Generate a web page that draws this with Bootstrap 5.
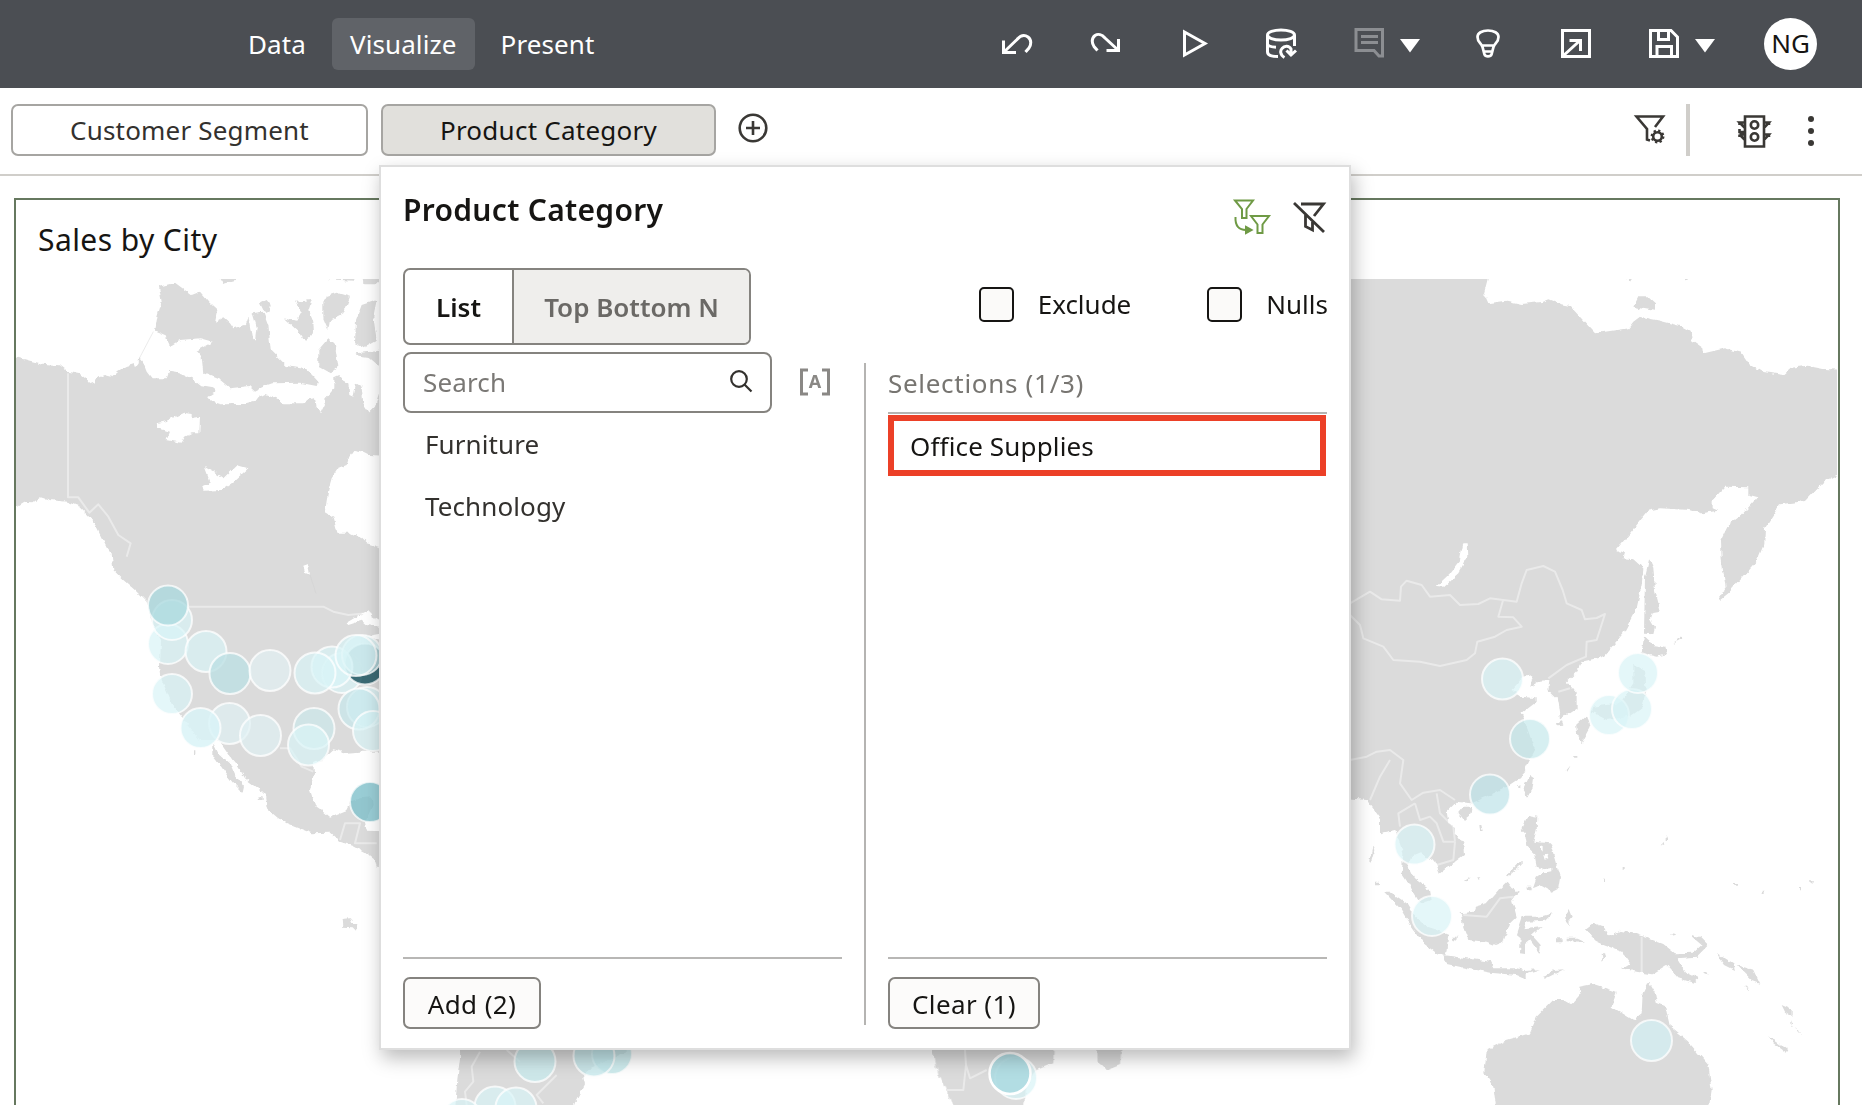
<!DOCTYPE html>
<html lang="en">
<head>
<meta charset="utf-8">
<meta name="viewport" content="width=device-width, initial-scale=1">
<title>Sales by City</title>
<link href="https://cdn.jsdelivr.net/npm/bootstrap@5.3.0/dist/css/bootstrap.min.css" rel="stylesheet">
<style>
body{font-family:"Noto Sans",sans-serif;font-size:26px;line-height:1.36;color:#161513;height:1105px;overflow:hidden;background:#fff}
svg{display:block;flex:none;overflow:visible}
.topbar{height:88px;background:#4b4e53;padding:0 45px 0 230px}
.topbar .nav-link{color:#fff;height:52px;padding:2px 18px 0;display:flex;align-items:center;border-radius:6px;letter-spacing:.1px}
.topbar .nav-link.active{background:#606368}
.tools{gap:56px}
.tools svg,.ico{fill:none;stroke:#fff;stroke-width:3}
.tools .caret{fill:#fff;stroke:none}
.tools .dim{stroke:#8c8e92}
.avatar{width:53px;height:52px;background:#fff;color:#161513;border-radius:50%;margin-left:-3px}
.filterbar{height:88px;border-bottom:2px solid #d0ceca;padding:16px 48px 18px 11px}
.pill{height:52px;border:2px solid #a6a5a2;border-radius:7px;background:#fff;color:#33312e;font-size:26px;padding:1px 0 0;letter-spacing:.18px}
.pill.on{background:#e1e0dc;color:#161513;letter-spacing:.25px}
.dark{fill:none;stroke:#3a3835;stroke-width:2.6}
.bar{width:4px;height:52px;background:#d0ceca}
.viz{margin:22px 22px 0 14px;border:2px solid #66785f;border-radius:0;height:960px;overflow:hidden}
.viz h2{font-size:30px;font-weight:400;line-height:40px;margin:0;padding:20px 22px 19px;letter-spacing:.42px}
.viz svg{overflow:hidden}
.pop{position:absolute;left:379px;top:165px;width:972px;height:885px;border:2px solid #dedede;background:#fff;box-shadow:3px 8px 18px rgba(0,0,0,.27);padding:0 21px 19px 22px}
.pop h3{font-size:30px;font-weight:600;margin:0;letter-spacing:.3px}
.seg{height:77px;width:348px;border:2px solid #85837f;border-radius:7px;overflow:hidden;font-weight:600}
.seg>div{padding-top:2px}
.seg .one{width:109px;border-right:2px solid #85837f}
.seg .two{background:#efeeec;color:#6b6966}
.chk{width:35px;height:35px;border:2.5px solid #161513;border-radius:5px;background:#fbfaf9;margin:0 24px 0 0}
.colum{width:439px}
.find{width:369px;height:61px;border:2px solid #85837f;border-radius:8px;padding:1px 18px 0 18px;color:#7a7875;letter-spacing:.15px}
.item{height:62px;padding:2px 0 0 22px;color:#33312e;letter-spacing:.1px}
.vr2{width:2px;margin:11px 22px 4px;background:#b5b4b2}
.sel{height:62px;border-bottom:2px solid #b5b4b2;color:#777571;letter-spacing:.7px;padding-top:3px}
.hot{height:61px;margin-top:1px;border:6px solid #ec4027;padding:2px 0 0 16px;width:438px;letter-spacing:.15px}
.foot{border-top:2px solid #b8b7b5;padding-top:18px}
.foot .btn{height:52px;border:2px solid #85837f;border-radius:7px;background:#fcfbfa;color:#161513;font-size:26px;padding:1px 0 0;line-height:1;letter-spacing:.4px}
</style>
</head>
<body>
<nav class="topbar d-flex align-items-center justify-content-between">
  <div class="d-flex" style="gap:8px">
    <a class="nav-link" href="#">Data</a>
    <a class="nav-link active" href="#">Visualize</a>
    <a class="nav-link" href="#">Present</a>
  </div>
  <div class="tools d-flex align-items-center">
    <svg width="32" height="32"><path d="M2.500 12.500V24.500H15M3 24L16 11.500C19 8 23 6 27 9C31 12 30 17 28 20L24.500 24"/></svg>
    <svg width="32" height="32"><path d="M29.500 11V22.500H17.500M29 22L16 10C13 6.500 9 5.500 6 7.500C2 10.500 3 15.500 5 18.500L8.500 22.500"/></svg>
    <svg width="32" height="32"><path d="M7.500 4L28 15.500L7.500 27Z"/></svg>
    <svg width="32" height="32"><ellipse cx="16" cy="7" rx="13.500" ry="5"/><path d="M2.500 7V24C2.500 27 7 28.500 13 28.500M29.500 7V18M2.500 16C3 18 7 19 11 19.200M19.500 29.500C15 27 15 22.500 17 20.500C19.500 17.500 24 17.500 26 21V27M21.500 22.500L26 27L31 22.500"/></svg>
    <div class="d-flex align-items-center" style="gap:16px">
      <svg class="dim" width="32" height="32"><path d="M3 1.500H29.500V28H26L21 22.500H3ZM8 8.500H25M8 14.500H25"/></svg>
      <svg class="caret" width="15" height="14"><path d="M-1 2H19L9 15.500Z"/></svg>
    </div>
    <svg width="32" height="32"><path d="M10.500 19C9 15 5.500 14 5.500 9C5.500 5 10 2.500 16 2.500S26.500 5 26.500 9C26.500 14 23 15 21.500 19L19.500 26.500C18.500 29 13.500 29 12.500 26.500ZM9 17.500H23M11 23.500H21" stroke-width="2.700"/></svg>
    <svg width="32" height="32"><path d="M2.500 2.500H29.500V28.500H2.500ZM3 28L20 12.500M9.500 12.500H20.500V23"/></svg>
    <div class="d-flex align-items-center" style="gap:16px">
      <svg width="32" height="32"><path d="M2.500 2.500H23L29.500 9V28.500H2.500ZM10.500 3V11.500H20.500V3M9 28V18.500H23.500V28"/></svg>
      <svg class="caret" width="15" height="14"><path d="M-1 2H19L9 15.500Z"/></svg>
    </div>
    <div class="avatar d-flex align-items-center justify-content-center">NG</div>
  </div>
</nav>

<div class="filterbar d-flex align-items-center">
  <button class="btn pill" style="width:357px">Customer Segment</button>
  <button class="btn pill on" style="width:335px;margin-left:13px">Product Category</button>
  <svg class="dark" width="32" height="32" style="margin:-4px 0 0 21px"><circle cx="16" cy="16" r="13.300"/><path d="M16 9V23M9 16H23"/></svg>
  <div class="d-flex align-items-center ms-auto">
    <svg class="dark" width="32" height="32" viewBox="0 0 32 32"><path d="M21 13L29 2.500H2.500L13 15V25.500L16 26.500" stroke-width="2.600"/><circle cx="23.500" cy="22.500" r="4.300"/><circle cx="23.500" cy="22.500" r="5.700" stroke-dasharray="2.200 2.270" stroke-width="2.500"/></svg>
    <div class="bar" style="margin:0 48px 0 20px"></div>
    <svg class="dark" width="32" height="34"><path d="M7 3.500H26V33.500H7ZM7 19H1.500V16M26 9.500H31L26 15M7 9.500H1.500L7 15M1.500 21.500L7 27M26 21.500H31L26 27M1.500 21.500H7M1.500 9.500V12M31 9.500V12M31 21.500V24M1.500 21.500V24"/><circle cx="16.500" cy="12" r="3.700"/><circle cx="16.500" cy="24" r="3.700"/></svg>
    <svg width="6" height="32" fill="#3a3835" style="margin-left:38px"><circle cx="3" cy="5" r="3"/><circle cx="3" cy="17" r="3"/><circle cx="3" cy="29" r="3"/></svg>
  </div>
</div>

<section class="viz">
  <h2>Sales by City</h2>
  <svg width="1821" height="826" viewBox="16 279 1821 826">
    <defs><filter id="coast" x="0" y="0" width="1" height="1"><feTurbulence type="fractalNoise" baseFrequency=".16" numOctaves="2" seed="4"/><feDisplacementMap in="SourceGraphic" scale="5" xChannelSelector="R" yChannelSelector="G"/></filter></defs>
    <g fill="#dbdbdb" filter="url(#coast)">
      <!-- North America -->
      <g transform="translate(0 260) scale(.33333)">
        <path d="M20 290L60 294 90 302 130 312 180 316 205 335 240 342 262 360 285 374 290 355 315 345 335 350 355 332 380 318 400 312 405 325 415 312 418 295 430 310 440 335 455 355 500 355 508 335 535 340 575 355 600 375 640 382 648 395 628 408 635 425 660 433 740 432 765 425 775 412 795 402 830 415 850 430 910 430 925 418 945 415 950 445 965 455 975 435 972 420 990 400 1003 385 1003 350 1015 345 1030 362 1045 370 1048 405 1060 410 1068 370 1085 380 1090 430 1108 457 1125 440 1138 400 1200 400V590L1110 585 1090 575 1062 570 1048 590 1040 615 1015 625 995 655 985 690 975 755 1000 770 1012 818 1050 818 1085 835 1100 850 1200 880V1475L1080 1475 1040 1478 1000 1468 965 1500 940 1510 942 1540 930 1590 945 1635 990 1673 1035 1655 1050 1625 1080 1615 1115 1612 1118 1635 1105 1665 1095 1690 1100 1712 1200 1715V1825L1130 1820 1125 1800 1100 1780 1060 1758 1020 1745 990 1718 935 1720 860 1690 830 1670 800 1645 795 1605 775 1585 735 1555 715 1520 690 1490 655 1440 600 1440 545 1370 520 1340 485 1260 480 1220 483 1140 460 1100 440 1025 410 995 370 960 340 930 335 880 320 860 290 800 270 770 240 740 200 725 150 720 125 712 100 730 70 728 20 760Z"/>
        <path d="M477 80L525 68 575 105 600 95 630 130 652 150 645 185 670 172 690 190 700 205 735 195 745 168 755 230 765 242 770 200 758 160 790 155 805 195 812 270 860 318 920 328 955 365 950 378 900 368 820 370 790 380 765 392 750 378 690 385 660 360 610 340 605 290 590 272 638 245 600 235 540 240 510 258 495 225 465 212 472 170 485 125Z"/>
        <path d="M780 130L800 120 812 135 808 160 790 150ZM885 125L935 120 925 150 940 185 942 220 912 245 890 210 852 175 890 185 905 160ZM650 40H710L705 62 670 72ZM980 108L1010 98 1050 110 1030 160 990 180 985 210 970 175 970 125ZM1085 135L1130 120 1120 170 1130 240 1090 262 1065 250 1068 180ZM985 235L1005 255 1015 320 990 340 955 320 955 270ZM1070 280L1140 272V320L1110 295 1075 290ZM980 40H1060V62L985 58ZM1088 50H1150V70L1090 70Z"/>
        <path d="M640 1450L655 1480 690 1510 705 1545 732 1580 728 1598 700 1570 685 1550 660 1515 640 1490ZM775 1612L788 1612 788 1620 778 1620ZM1028 1977L1050 1975 1058 1992 1072 1992 1068 2012 1058 2002 1030 2000ZM583 1474h6v12h-6z"/>
        <g fill="#fff"><path d="M470 490L500 482 550 458 575 462 575 475 600 470 598 520 575 520 555 530 545 548 500 540 510 515 475 505ZM615 622L640 635 670 655 710 615 745 625 700 665 665 690 610 692 607 678 632 668ZM910 920L925 915 930 945 915 938ZM1040 1090L1070 1072 1105 1050 1115 1070 1140 1085V1100L1100 1095 1085 1082 1045 1095ZM1095 1130L1150 1120V1140Z"/></g>
      </g>
      <!-- Asia, Kamchatka, Indochina -->
      <g transform="translate(1340 260) scale(.33333)">
        <path d="M20 20H440L443 57 432 100 445 130 500 122 545 132 605 126 625 118 660 132 690 138 765 220 865 205 880 185 900 170 960 182 1030 200 1052 212 1055 240 1090 265 1092 280 1155 265 1205 278 1230 315 1265 335 1330 345 1355 323 1400 317 1450 327 1530 330V630L1490 645 1450 665 1395 723 1320 733 1275 805 1273 850 1250 905 1165 1000 1140 1020 1138 1005 1158 990 1145 900 1143 840 1165 795 1205 765 1252 712 1225 705 1225 682 1155 680 1118 720 1118 745 1135 752 1085 760 1050 750 960 745 925 752 890 795 828 870 855 880 850 895 880 898 910 925 905 975 890 1045 850 1120 790 1190 725 1205 710 1235 680 1265 710 1300 710 1345 660 1378 655 1340 650 1315 625 1290 628 1260 600 1262 570 1280 580 1245 550 1250 515 1290 545 1310 590 1315 590 1325 545 1360 560 1400 585 1470 562 1515 545 1550 500 1580 440 1610 395 1630 350 1625 320 1655 325 1685 370 1750 372 1785 345 1805 300 1840 285 1805 240 1780 215 1790 205 1820 222 1855 270 1890 275 1920 240 1930 205 1870 185 1840 190 1780 165 1710 120 1720 120 1675 80 1620 20 1615Z"/>
        <path d="M895 112L925 112 945 130 945 152 900 145 880 140ZM850 50H880L870 65ZM1015 50H1060L1040 60ZM928 895L940 920 945 990 962 1055 935 1060 930 1075 945 1100 940 1120 912 1118 915 950ZM912 1130L940 1155 975 1160 982 1182 950 1190 905 1180ZM998 1155L1020 1130 1035 1132 1010 1145Z"/>
        <path d="M380 850L382 890 355 940 310 980 290 978 325 945 360 900 370 850Z" fill="#fff"/>
      </g>
      <!-- Japan, Philippines, Indonesia, Australia and Pacific islands -->
      <g transform="translate(1340 640) scale(.33333)">
        <path d="M880 70L915 90 920 150 905 205 870 230 800 240 755 215 760 200 840 190 880 130ZM708 255L740 225 752 260 725 310 712 285ZM648 250l18 -6 4 10 -20 2zM700 348h12v8h-12zM680 390L692 376 682 395ZM568 405L582 415 578 445 562 472 548 450ZM535 435h6v10h-6zM355 518L370 500 398 500 395 520 372 540ZM418 555h6l4 18h-8zM88 665L98 618 103 630 92 668ZM105 725h12v8h-12z"/>
        <path d="M565 525L592 530 590 570 580 605 630 610 645 660 660 715 655 745 635 755 600 735 590 740 578 745 590 710 620 690 590 680 582 640 562 620 555 580 545 570ZM500 705L545 660 545 674 505 709ZM560 740h15v8h-15zM372 722L392 708 380 724ZM412 712h12l-8 8z"/>
        <path d="M610 645l14-4 4 14-14 4zM600 620l8 0 0 14-8 0zM612 688l22-4 0 10-22 4z" fill="#fff"/>
        <path d="M132 755L150 755 200 790 225 830 260 860 290 870 325 885 318 945 290 940 250 910 215 860 185 810ZM310 945L380 955 450 965 460 985 530 985 550 990 600 988 560 1000 560 1018 530 1005 450 998 380 985 320 972ZM610 1010L640 990 675 988 630 1010 610 1020ZM338 890l12 0 0 12-10-2z"/>
        <path d="M362 820L400 815 405 800 440 790 480 745 500 725 515 745 540 755 515 775 530 830 510 850 490 905 465 915 440 905 385 900 370 860ZM548 830L600 830 638 820 615 842 560 845 550 865 605 858 575 885 602 915 600 942 570 900 555 912 555 942 540 940 542 895 530 885ZM675 825L688 805 698 830 685 845 690 860 678 845ZM648 895h20v12h-20zM680 893L710 893 735 905 680 904ZM785 945L795 935 798 950 788 962Z"/>
        <path d="M735 868L760 848 790 860 805 890 840 872 890 882 970 912 1005 940 1060 938 1085 915 1050 885 1080 890 1105 915 1070 950 1010 955 1035 995 1075 1015 1060 1028 1015 1015 980 975 935 1003 890 995 845 985 870 970 845 935 790 915 770 905ZM1128 938L1180 970 1185 990 1155 975ZM1190 975L1240 990 1258 1028 1235 1020 1220 1005ZM1325 1095L1358 1110 1358 1130 1335 1115ZM1285 1188L1345 1230 1340 1238 1300 1210ZM1370 1160l10 25-8-8zM1212 1038l15 6 0 6zM1350 1140l8 18-6-2zM1400 724h24l-10 10zM1182 729h12v5h-12zM1265 752h6v10h-6zM1377 741h6v10h-6zM962 620l8-14 4 6zM977 590h6v10h-6zM848 681h6v10h-6zM789 716h6v10h-6zM990 885l8-8 8 4zM1088 996h14l4 8z"/>
        <path d="M475 1450L460 1340 433 1300 440 1230 500 1200 570 1180 590 1130 640 1080 670 1080 695 1095 722 1065 718 1040 760 1032 800 1045 830 1055 815 1100 880 1140 905 1120 908 1060 925 1025 945 1060 950 1085 975 1095 990 1160 1040 1200 1105 1275 1115 1350 1100 1450Z"/>
      </g>
      <!-- South America and southern Africa -->
      <path transform="translate(440 1035) scale(.33333)" d="M62 0L60 70 52 130 45 230H395L408 195 435 145 430 125 450 100 560 50V0Z"/>
      <path transform="translate(920 1035) scale(.33333)" d="M40 0V50L55 120 75 160 95 205 110 230H310L320 150 350 105 400 85 402 0ZM528 0L530 80 562 105 600 90 608 0Z"/>
    </g>
    <!-- country borders -->
    <g fill="none" stroke="#fff" stroke-opacity=".42" stroke-width="6" stroke-linejoin="round">
      <path transform="translate(0 260) scale(.33333)" d="M204 340V712L235 712 268 758 295 733 325 770 355 825 392 850 380 890M565 1040H970L1000 1055 1045 1065 1100 1060M840 1465L870 1465 905 1520 940 1535M1020 1740L1035 1690H1080L1065 1750 1130 1750"/>
      <path transform="translate(0 260) scale(.33333)" stroke="#cfcfcf" stroke-width="3" d="M460 215L418 295M930 945L948 1000"/>
      <path transform="translate(1340 260) scale(.33333)" d="M30 1030L90 995 125 1018 180 1022 183 980 200 962 245 975 270 1010 330 1005 360 1035 415 1032 450 1015 530 1025 545 970 560 930 610 918 645 935 668 990 680 1030 725 1050 735 1078 770 1074 795 1062 770 1140 740 1145 738 1190 680 1215 625 1255M490 1018L475 1070 520 1072 545 1100 500 1110 465 1130 412 1145 405 1180 380 1200 300 1218 240 1205 160 1200 130 1160 70 1135 60 1095 30 1065M30 1500L80 1490 110 1475 150 1470 190 1500 180 1570 215 1620 250 1598 300 1590 345 1620M150 1500L120 1550 90 1620M225 1630L175 1660 180 1700M225 1630L240 1680 270 1670 290 1690 310 1745 345 1745 340 1800 290 1815M290 1600L300 1660 340 1700 345 1745M370 1965L440 1970 480 1915 520 1910M655 1295L690 1285M905 2030V2140"/>
      <path transform="translate(440 1035) scale(.33333)" d="M120 50L95 95 100 140 75 170 80 210M200 45L240 80M350 120L290 180 310 205"/>
      <path transform="translate(920 1035) scale(.33333)" d="M135 45L138 90 150 130 200 105M138 90L130 165H80"/>
    </g>
    <!-- sales bubbles -->
    <g stroke="#fff" stroke-opacity=".75" stroke-width="2" fill="#d9f3f7" fill-opacity=".7">
      <circle cx="168" cy="644" r="20"/><circle cx="172" cy="620" r="20"/><circle cx="168" cy="605.500" r="20" fill="#a8d8de" fill-opacity=".75"/>
      <circle cx="206" cy="651.500" r="20.500"/><circle cx="230" cy="673.500" r="20.500" fill="#bde0e4" fill-opacity=".8"/><circle cx="270" cy="670.500" r="20.500" fill="#e2f1f3"/>
      <circle cx="172" cy="694" r="20"/><circle cx="229.500" cy="723.500" r="20.500" fill="#dff1f3"/><circle cx="200.500" cy="728" r="20" fill-opacity=".85"/><circle cx="260.500" cy="735.500" r="20.500" fill="#dff1f3"/>
      <circle cx="342" cy="673" r="20"/><circle cx="365" cy="664" r="20.500" fill="#1e5560" fill-opacity=".85"/><circle cx="332" cy="667" r="20.500"/><circle cx="315" cy="673" r="20.500"/><circle cx="362" cy="655" r="20"/><circle cx="356" cy="655.500" r="20.500"/>
      <circle cx="367" cy="707" r="20"/><circle cx="359" cy="709" r="20.500" fill="#c8e8ec"/><circle cx="373" cy="731" r="20"/>
      <circle cx="314" cy="728.500" r="20.500" fill="#cce8eb"/><circle cx="308.500" cy="745" r="20.500"/><circle cx="370" cy="802" r="20" fill="#7fc0ca" fill-opacity=".8"/>
      <circle cx="1502.500" cy="679" r="20.500"/><circle cx="1530" cy="739" r="20" fill="#c4e8eb"/><circle cx="1490" cy="794.500" r="20" fill="#bde3e8"/>
      <circle cx="1414.500" cy="844.500" r="20"/><circle cx="1432" cy="916" r="20"/><circle cx="1609" cy="715" r="20"/><circle cx="1632" cy="709" r="20"/><circle cx="1638" cy="673" r="20"/><circle cx="1651.500" cy="1040.500" r="20.500" fill="#d3edf1" fill-opacity=".8"/>
      <circle cx="535" cy="1061.500" r="20.500" fill="#c8ecf0"/><circle cx="612" cy="1054" r="20" fill="#b9e2e6"/><circle cx="594" cy="1056" r="20.500" fill="#bfe6ea"/><circle cx="495" cy="1107" r="20.500"/><circle cx="516" cy="1108" r="20.500"/><circle cx="462" cy="1119" r="20"/>
      <circle cx="1016" cy="1078" r="21"/><circle cx="1010" cy="1073.500" r="20.500" fill="#aedce2" fill-opacity=".9" stroke-width="2.500" stroke-opacity="1"/>
    </g>
  </svg>
</section>

<div class="pop d-flex flex-column">
  <div class="d-flex justify-content-between align-items-center" style="height:85px;margin-bottom:16px">
    <h3>Product Category</h3>
    <div class="d-flex align-items-center" style="gap:24px;padding:14px 2px 0 0">
      <svg width="36" height="36" fill="none" stroke="#6f9a45" stroke-width="2"><path d="M1 1.500H19L12.500 10V19H8V10ZM17 17H35L28.500 25.500V34H23.500V25.500ZM1.500 18C1 27 5 31 12 31"/><path d="M12 28L17.500 31L12 34Z" fill="#6f9a45"/></svg>
      <svg class="dark" width="32" height="32"><path d="M0 2L30 31M7 3H29.500L20 15M11.500 14V25.500L18.500 29V21" stroke-width="2.800"/></svg>
    </div>
  </div>
  <div class="d-flex justify-content-between align-items-center" style="height:77px;margin-bottom:7px">
    <div class="seg d-flex">
      <div class="one d-flex align-items-center justify-content-center">List</div>
      <div class="two flex-fill d-flex align-items-center justify-content-center">Top Bottom N</div>
    </div>
    <div class="d-flex" style="gap:76px;margin:-3px 0 0">
      <label class="d-flex align-items-center"><span class="chk"></span>Exclude</label>
      <label class="d-flex align-items-center"><span class="chk"></span>Nulls</label>
    </div>
  </div>
  <div class="d-flex flex-fill">
    <div class="colum d-flex flex-column">
      <div class="d-flex align-items-center">
        <div class="find d-flex align-items-center justify-content-between">Search
          <svg width="22" height="22" fill="none" stroke="#33312e" stroke-width="2.200" style="margin-top:-4px"><circle cx="9" cy="9" r="7.800"/><path d="M14.500 14.500L21.500 21.500"/></svg>
        </div>
        <svg width="30" height="28" fill="none" stroke="#8a8885" stroke-width="3" style="margin:-2px 0 0 28px"><path d="M8 2H1.500V26H8M22 2H28.500V26H22"/><text x="15" y="20" text-anchor="middle" font-size="18" font-weight="700" fill="#8a8885" stroke="none">A</text></svg>
      </div>
      <div class="item d-flex align-items-center">Furniture</div>
      <div class="item d-flex align-items-center">Technology</div>
      <div class="foot mt-auto"><button class="btn" style="width:138px">Add (2)</button></div>
    </div>
    <div class="vr2"></div>
    <div class="colum d-flex flex-column">
      <div class="sel d-flex align-items-center">Selections (1/3)</div>
      <div class="hot d-flex align-items-center">Office Supplies</div>
      <div class="foot mt-auto"><button class="btn" style="width:152px">Clear (1)</button></div>
    </div>
  </div>
</div>
<script src="https://cdn.jsdelivr.net/npm/bootstrap@5.3.0/dist/js/bootstrap.bundle.min.js"></script>
</body>
</html>
